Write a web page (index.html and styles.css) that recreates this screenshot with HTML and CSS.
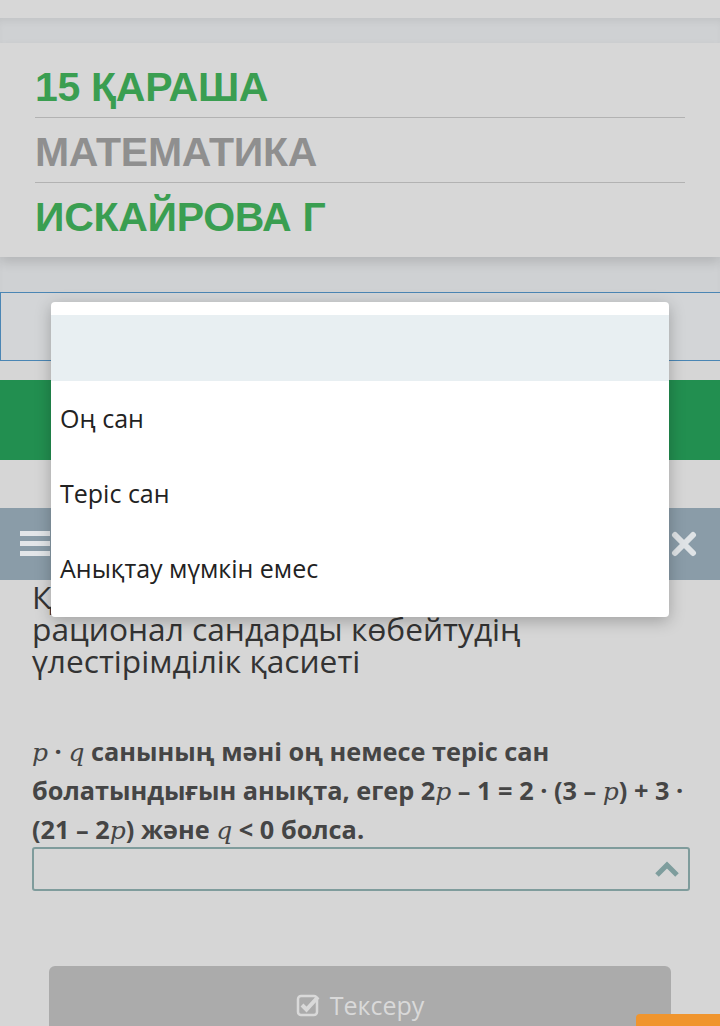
FILE: index.html
```html
<html>
  <head>
    <meta charset="utf-8">
    <link rel="stylesheet" href="styles.css">
  </head>
  <body>
    <div class="topbar"></div>
    <div class="band">
      <div class="header-card">
        <div class="header-row green">15 ҚАРАША</div>
        <div class="header-row grey">МАТЕМАТИКА</div>
        <div class="header-row green">ИСКАЙРОВА Г</div>
      </div>
    </div>
    <div class="search"></div>
    <div class="green-band"></div>
    <div class="toolbar">
      <svg class="burger" width="30" height="28" viewBox="0 0 30 28">
        <rect x="0" y="1" width="30" height="5" fill="#e3e6e9"/>
        <rect x="0" y="11" width="30" height="5" fill="#e3e6e9"/>
        <rect x="0" y="21" width="30" height="5" fill="#e3e6e9"/>
      </svg>
      <svg class="close" width="26" height="26" viewBox="0 0 26 26">
        <path d="M4 4 L22 22 M22 4 L4 22" stroke="#dfe3e6" stroke-width="6" stroke-linecap="round"/>
      </svg>
    </div>
    <div class="content">
      <h2 class="title">Қосындыға қатысты<br>рационал сандарды көбейтудің<br>үлестірімділік қасиеті</h2>
      <p class="question"><span class="m">p</span> · <span class="m">q</span> санының мәні оң немесе теріс сан<br>болатындығын анықта, егер 2<span class="m">p</span> – 1 = 2 · (3 – <span class="m">p</span>) + 3 ·<br>(21 – 2<span class="m">p</span>) және <span class="m">q</span> &lt; 0 болса.</p>
      <div class="select">
        <svg width="26" height="18" viewBox="0 0 26 18">
          <path d="M3 15 L13 5 L23 15" stroke="#7e9d9d" stroke-width="5" fill="none"/>
        </svg>
      </div>
      <div class="check-btn">
        <svg width="24" height="24" viewBox="0 0 24 24">
          <rect x="2" y="3" width="19" height="19" rx="3" stroke="#d9d9d9" stroke-width="2.5" fill="none"/>
          <path d="M6 12 L10.5 16.5 L22 4" stroke="#d9d9d9" stroke-width="4" fill="none"/>
        </svg>
        <span>Тексеру</span>
      </div>
    </div>
    <div class="corner"></div>
    <div class="dropdown">
      <div class="option active"></div>
      <div class="option">Оң сан</div>
      <div class="option">Теріс сан</div>
      <div class="option">Анықтау мүмкін емес</div>
    </div>
  </body>
</html>
```

FILE: styles.css
```css
body {
  margin: 0;
  background: #d6d6d6;
  font-family: "Open Sans", sans-serif;
  height: 1026px;
  overflow: hidden;
  position: relative;
}
.topbar {
  height: 18px;
  background: #d7d7d7;
}
.band {
  background: #cfd1d3;
  padding: 25px 0 35px;
  box-shadow: inset 0 6px 8px -4px rgba(0, 0, 0, 0.08);
}
.header-card {
  background: #d7d7d7;
  padding: 10px 35px 9px;
  box-shadow: 0 6px 10px rgba(0, 0, 0, 0.12);
}
.header-row {
  font-family: "Liberation Sans", Arial, sans-serif;
  font-weight: bold;
  font-size: 41px;
  height: 65px;
  line-height: 68px;
  letter-spacing: -0.3px;
  border-bottom: 1px solid #b2b2b2;
  box-sizing: border-box;
}
.header-row:last-child {
  border-bottom: none;
}
.green {
  color: #3a9e51;
}
.grey {
  color: #8f8f8f;
}
.search {
  height: 67px;
  border: 1px solid #4b86b4;
  border-right: none;
  background: #d3d5d7;
}
.green-band {
  margin-top: 19px;
  height: 80px;
  background: #228f50;
}
.toolbar {
  margin-top: 48px;
  height: 72px;
  background: #8a9ca8;
  display: flex;
  align-items: center;
  justify-content: space-between;
  padding: 0 23px 0 20px;
}
.content {
  padding: 0 30px 0 32px;
}
.title {
  margin: 0;
  font-size: 31.7px;
  font-weight: 400;
  line-height: 32px;
  color: #333;
  padding-top: 1px;
}
.question {
  margin: 55px 0 0;
  font-size: 25.3px;
  font-weight: bold;
  line-height: 39px;
  color: #454545;
  white-space: nowrap;
}
.m {
  font-family: "DejaVu Serif", serif;
  font-style: italic;
  font-weight: normal;
  font-size: 25px;
  line-height: 0;
}
.select {
  margin-top: -2px;
  height: 44px;
  width: 658px;
  box-sizing: border-box;
  border: 2px solid #7f9c9c;
  border-radius: 3px;
  display: flex;
  align-items: center;
  justify-content: flex-end;
  padding-right: 8px;
}
.check-btn {
  margin: 75px 19px 0 17px;
  height: 80px;
  background: #ababab;
  border-radius: 6px;
  display: flex;
  justify-content: center;
  padding-top: 25px;
  box-sizing: border-box;
  gap: 10px;
  color: #d9d9d9;
  font-size: 25px;
  line-height: 28px;
}
.check-btn svg {
  margin-top: 2px;
}
.corner {
  position: absolute;
  right: 0;
  bottom: 0;
  width: 84px;
  height: 12px;
  background: #f0952e;
  border-top-left-radius: 4px;
}
.dropdown {
  position: absolute;
  left: 51px;
  top: 302px;
  width: 618px;
  height: 315px;
  background: #fff;
  border-radius: 4px;
  padding-top: 13px;
  box-sizing: border-box;
  box-shadow: 0 4px 16px rgba(0, 0, 0, 0.25);
}
.option {
  height: 75px;
  line-height: 75px;
  padding-left: 9px;
  font-size: 25px;
  color: #222;
}
.option.active {
  height: 66px;
  background: #e8eff2;
}
```
